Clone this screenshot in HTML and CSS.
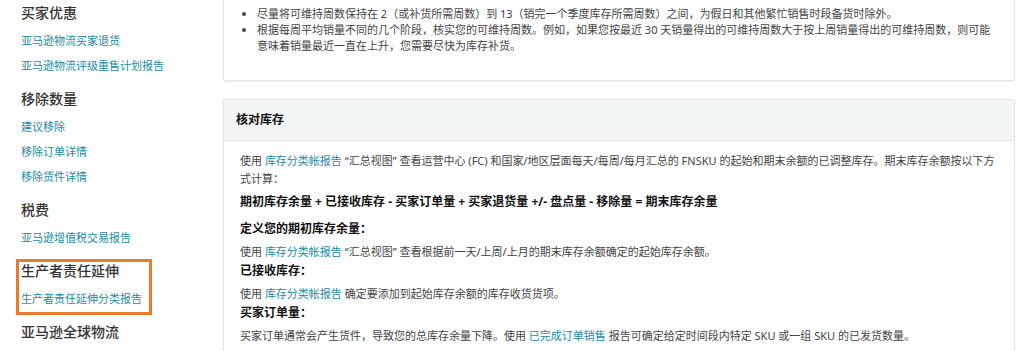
FILE: index.html
```html
<!DOCTYPE html>
<html lang="zh-CN">
<head>
<meta charset="utf-8">
<title>库存报告帮助</title>
<link rel="stylesheet" href="styles.css">
</head>
<body>
<div class="page">
  <aside class="sidebar">
    <section class="nav-sec">
      <h3>买家优惠</h3>
      <a href="#">亚马逊物流买家退货</a>
      <a href="#">亚马逊物流评级重售计划报告</a>
    </section>
    <section class="nav-sec">
      <h3>移除数量</h3>
      <a href="#">建议移除</a>
      <a href="#">移除订单详情</a>
      <a href="#">移除货件详情</a>
    </section>
    <section class="nav-sec">
      <h3>税费</h3>
      <a href="#">亚马逊增值税交易报告</a>
    </section>
    <section class="nav-sec highlight">
      <h3>生产者责任延伸</h3>
      <a href="#">生产者责任延伸分类报告</a>
    </section>
    <section class="nav-sec">
      <h3>亚马逊全球物流</h3>
    </section>
  </aside>
  <main class="main">
    <div class="card card-top">
      <ul class="tips">
        <li>尽量将可维持周数保持在 2（或补货所需周数）到 13（销完一个季度库存所需周数）之间，为假日和其他繁忙销售时段备货时除外。</li>
        <li>根据每周平均销量不同的几个阶段，核实您的可维持周数。例如，如果您按最近 30 天销量得出的可维持周数大于按上周销量得出的可维持周数，则可能<br>意味着销量最近一直在上升，您需要尽快为库存补货。</li>
      </ul>
    </div>
    <div class="card">
      <div class="card-head">核对库存</div>
      <div class="card-body">
        <p>使用 <a href="#">库存分类帐报告</a> “汇总视图” 查看运营中心 (FC) 和国家/地区层面每天/每周/每月汇总的 FNSKU 的起始和期末余额的已调整库存。期末库存余额按以下方<br>式计算：</p>
        <p class="formula">期初库存余量 + 已接收库存 - 买家订单量 + 买家退货量 +/- 盘点量 - 移除量 = 期末库存余量</p>
        <h4>定义您的期初库存余量：</h4>
        <p>使用 <a href="#">库存分类帐报告</a> “汇总视图” 查看根据前一天/上周/上月的期末库存余额确定的起始库存余额。</p>
        <h4>已接收库存：</h4>
        <p>使用 <a href="#">库存分类帐报告</a> 确定要添加到起始库存余额的库存收货货项。</p>
        <h4>买家订单量：</h4>
        <p>买家订单通常会产生货件，导致您的总库存余量下降。使用 <a href="#">已完成订单销售</a> 报告可确定给定时间段内特定 SKU 或一组 SKU 的已发货数量。</p>
      </div>
    </div>
  </main>
</div>
</body>
</html>
```

FILE: styles.css
```css
html, body {
  margin: 0;
  padding: 0;
  background: #ffffff;
}

body {
  font-family: "Noto Sans", "Noto Sans CJK SC", sans-serif;
  color: #444;
  overflow: hidden;
}

a {
  color: #1a8ca3;
  text-decoration: none;
}

.page {
  display: flex;
  align-items: flex-start;
}

/* Sidebar */
.sidebar {
  width: 223px;
  flex: 0 0 223px;
  box-sizing: border-box;
  padding: 3px 0 0 21px;
}

.nav-sec {
  margin-bottom: 11px;
}

.nav-sec h3 {
  margin: 0 0 5px;
  font-size: 14px;
  line-height: 20px;
  font-weight: 500;
  color: #333;
}

.nav-sec a {
  display: block;
  font-size: 11px;
  line-height: 25px;
}

.nav-sec.highlight {
  position: relative;
}

.nav-sec.highlight::after {
  content: "";
  position: absolute;
  left: -5px;
  top: -2px;
  width: 136px;
  height: 56px;
  box-sizing: border-box;
  border: 3px solid #ec7a2c;
}

/* Main */
.main {
  flex: 1;
  min-width: 0;
  padding-right: 10px;
}

.card {
  border: 1px solid #e3e6e8;
  border-radius: 2px;
  box-shadow: 0 1px 2px rgba(0, 0, 0, 0.06);
  background: #fff;
}

.card + .card {
  margin-top: 18px;
}

.card-top {
  margin-top: -12px;
  padding: 17px 8px 26px 16px;
}

.tips {
  margin: 0;
  padding-left: 17px;
  font-size: 11px;
  line-height: 16px;
  color: #444;
}

.card-head {
  height: 40px;
  line-height: 40px;
  padding-left: 12px;
  background: #f3f6f7;
  border-bottom: 1px solid #e3e6e8;
  font-size: 12px;
  font-weight: 700;
  color: #111;
}

.card-body {
  padding: 11px 8px 20px 16px;
}

.card-body p {
  margin: 0;
  font-size: 11px;
  line-height: 18px;
  color: #444;
}

.card-body p.formula {
  margin: 4px 0 7px;
  font-size: 12px;
  line-height: 20px;
  font-weight: 700;
  color: #111;
}

.card-body h4 {
  margin: 0 0 4px;
  font-size: 12px;
  line-height: 20px;
  font-weight: 700;
  color: #111;
}
```
